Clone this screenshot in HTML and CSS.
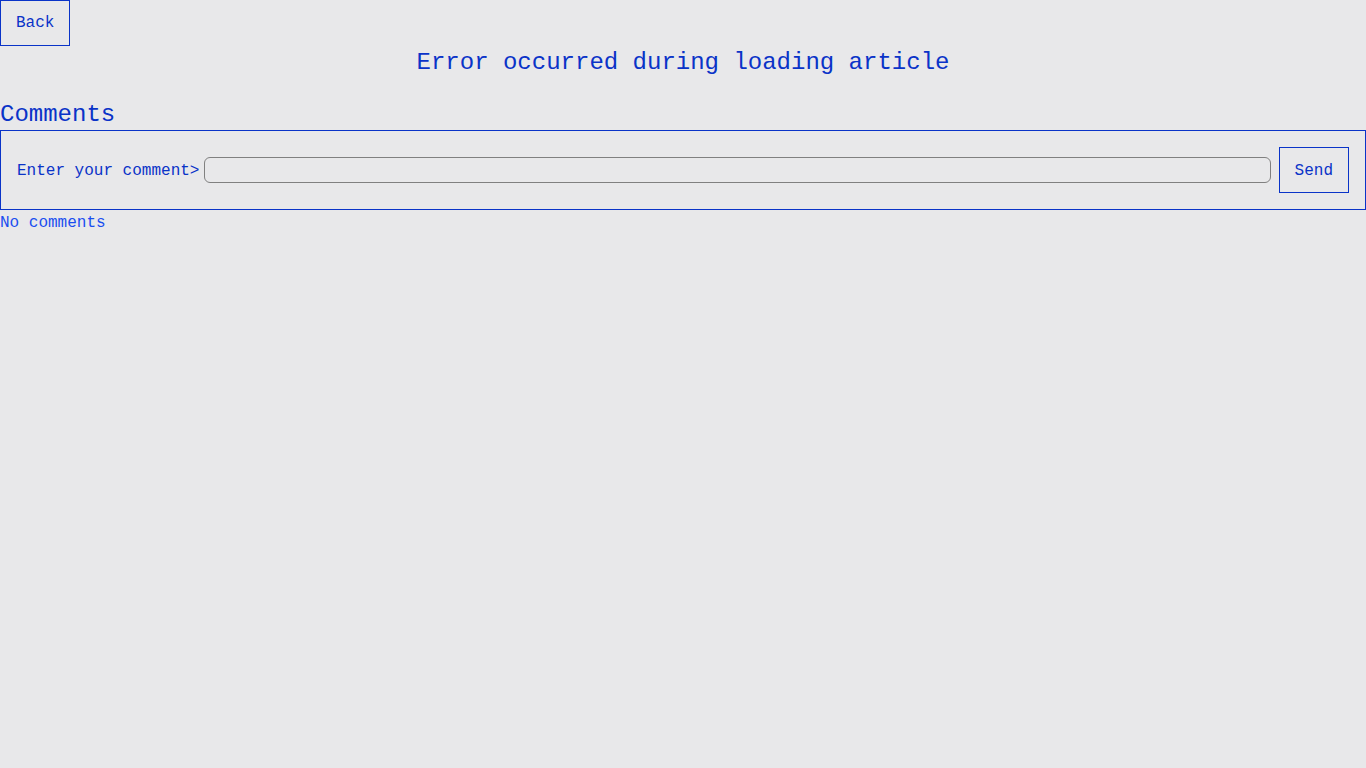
FILE: index.html
```html
<!DOCTYPE html>
<html>
<head>
<meta charset="utf-8">
<link rel="stylesheet" href="styles.css">
</head>
<body>
<button class="back">Back</button>
<h1 class="title">Error occurred during loading article</h1>
<section class="comments">
  <h2 class="comments-title">Comments</h2>
  <form class="comment-form">
    <label class="comment-label" for="c">Enter your comment&gt;</label>
    <input class="comment-input" id="c" type="text">
    <button class="send" type="button">Send</button>
  </form>
  <div class="empty">No comments</div>
</section>
</body>
</html>
```
FILE: styles.css
```css
html, body {
  margin: 0;
  padding: 0;
  background: #e8e8ea;
}
body {
  font-family: "Liberation Mono", monospace;
  color: #0a33c8;
  font-size: 16px;
}
.back, .send {
  display: block;
  box-sizing: border-box;
  height: 46px;
  padding: 0 15px;
  border: 1px solid #0a33c8;
  background: transparent;
  color: #0a33c8;
  font-family: "Liberation Mono", monospace;
  font-size: 16px;
  margin: 0;
}
.send {
  padding-top: 2px;
}
.title {
  margin: 0;
  padding-top: 3px;
  font-size: 24px;
  font-weight: normal;
  text-align: center;
  line-height: 28px;
}
.comments-title {
  margin: 0;
  margin-top: 23px;
  font-size: 24px;
  font-weight: normal;
  line-height: 30px;
}
.comment-form {
  display: flex;
  align-items: center;
  padding: 16px;
  border: 1px solid #0a33c8;
  margin: 0;
}
.comment-label {
  margin-right: 5px;
  padding-top: 2px;
}
.comment-input {
  flex: 1;
  height: 26px;
  box-sizing: border-box;
  border: 1px solid #808080;
  border-radius: 6px;
  background: transparent;
  margin: 0 8px 0 0;
  padding: 0 6px;
  font-family: "Liberation Mono", monospace;
}
.empty {
  color: #1a4ef0;
  line-height: 24px;
  padding-top: 1px;
}
```
